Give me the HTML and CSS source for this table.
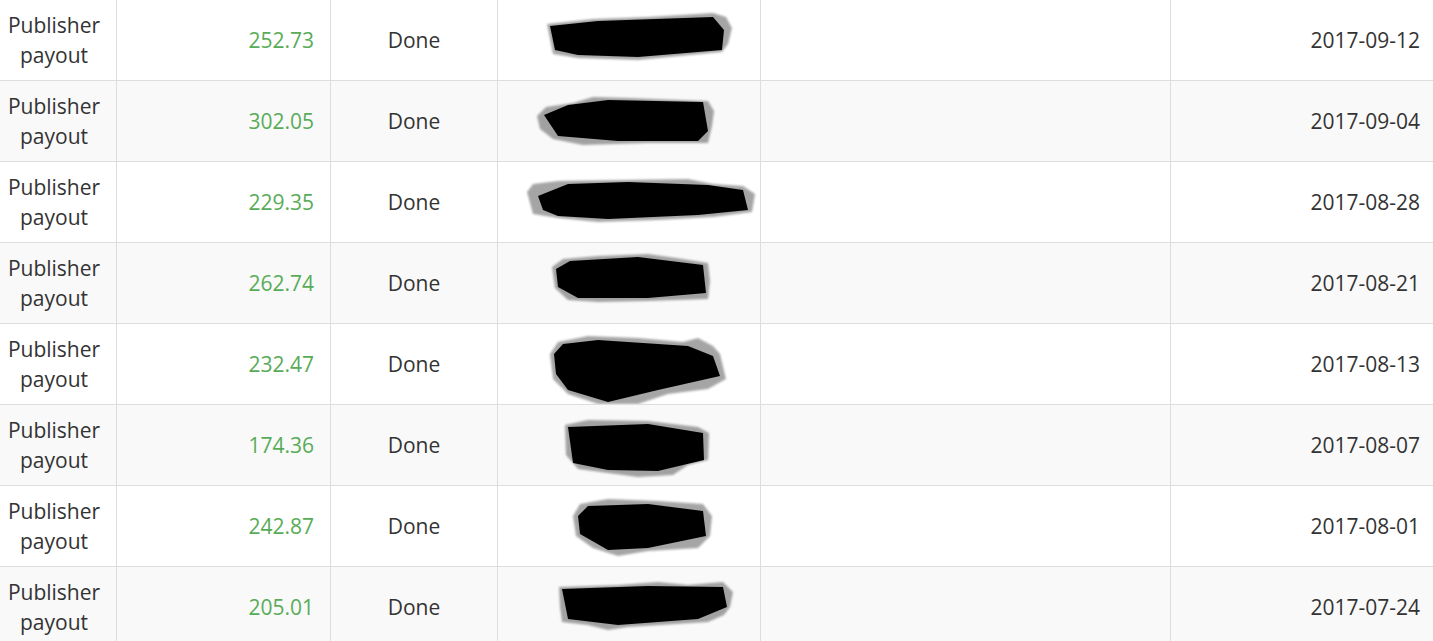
FILE: index.html
```html
<!DOCTYPE html>
<html lang="en">
<head>
    <meta charset="UTF-8">
    <meta name="viewport" content="width=device-width, initial-scale=1.0">
    <title>Payouts</title>
    <link rel="stylesheet" href="styles.css">
</head>
<body>

<svg class="defs" width="0" height="0">
    <filter id="soft"><feGaussianBlur stdDeviation="1.2"/></filter>
</svg>

<div class="payouts">
    <div class="row">
        <div class="cell type">Publisher payout</div>
        <div class="cell amount">252.73</div>
        <div class="cell status">Done</div>
        <div class="cell hidden">
            <svg viewBox="0 0 262 80" width="262" height="80">
                <polygon class="edge" points="49,24 95,19 150,17 215,13 228,17 234,28 230,44 224,52 140,60 80,58 55,54"/>
                <polygon class="ink" points="52,26 100,21 215,17 226,30 224,50 140,57 80,55 57,50"/>
            </svg>
        </div>
        <div class="cell note"></div>
        <div class="cell date">2017-09-12</div>
    </div>
    <div class="row">
        <div class="cell type">Publisher payout</div>
        <div class="cell amount">302.05</div>
        <div class="cell status">Done</div>
        <div class="cell hidden">
            <svg viewBox="0 0 262 80" width="262" height="80">
                <polygon class="edge" points="39,35 48,26 75,22 95,16 130,17 210,20 216,30 214,45 210,62 150,62 85,64 55,58 42,48"/>
                <polygon class="ink" points="46,34 70,24 110,19 205,21 210,50 200,60 120,60 60,55"/>
            </svg>
        </div>
        <div class="cell note"></div>
        <div class="cell date">2017-09-04</div>
    </div>
    <div class="row">
        <div class="cell type">Publisher payout</div>
        <div class="cell amount">229.35</div>
        <div class="cell status">Done</div>
        <div class="cell hidden">
            <svg viewBox="0 0 262 80" width="262" height="80">
                <polygon class="edge" points="29,30 35,22 60,19 120,18 190,17 215,22 245,24 257,32 254,50 215,55 160,58 100,60 60,56 35,52"/>
                <polygon class="ink" points="40,34 70,22 130,20 210,23 245,28 250,48 200,53 110,57 60,54 45,48"/>
            </svg>
        </div>
        <div class="cell note"></div>
        <div class="cell date">2017-08-28</div>
    </div>
    <div class="row">
        <div class="cell type">Publisher payout</div>
        <div class="cell amount">262.74</div>
        <div class="cell status">Done</div>
        <div class="cell hidden">
            <svg viewBox="0 0 262 80" width="262" height="80">
                <polygon class="edge" points="54,24 65,16 100,13 150,11 185,16 210,20 212,38 210,56 150,58 100,59 70,57 57,45"/>
                <polygon class="ink" points="58,26 72,18 140,14 205,22 208,50 150,55 80,55 60,44"/>
            </svg>
        </div>
        <div class="cell note"></div>
        <div class="cell date">2017-08-21</div>
    </div>
    <div class="row">
        <div class="cell type">Publisher payout</div>
        <div class="cell amount">232.47</div>
        <div class="cell status">Done</div>
        <div class="cell hidden">
            <svg viewBox="0 0 262 80" width="262" height="80">
                <polygon class="edge" points="52,30 60,18 90,12 140,14 185,18 200,14 215,22 222,30 228,55 210,65 170,70 140,80 100,80 70,70 55,55"/>
                <polygon class="ink" points="56,30 65,20 100,16 190,22 215,32 222,52 160,66 110,78 70,66 58,50"/>
            </svg>
        </div>
        <div class="cell note"></div>
        <div class="cell date">2017-08-13</div>
    </div>
    <div class="row">
        <div class="cell type">Publisher payout</div>
        <div class="cell amount">174.36</div>
        <div class="cell status">Done</div>
        <div class="cell hidden">
            <svg viewBox="0 0 262 80" width="262" height="80">
                <polygon class="edge" points="67,20 90,15 150,16 200,22 211,28 210,55 190,60 175,70 140,72 110,68 80,64 68,50"/>
                <polygon class="ink" points="70,22 150,19 205,28 206,55 160,66 110,65 75,58"/>
            </svg>
        </div>
        <div class="cell note"></div>
        <div class="cell date">2017-08-07</div>
    </div>
    <div class="row">
        <div class="cell type">Publisher payout</div>
        <div class="cell amount">242.87</div>
        <div class="cell status">Done</div>
        <div class="cell hidden">
            <svg viewBox="0 0 262 80" width="262" height="80">
                <polygon class="edge" points="75,30 82,18 110,13 160,15 205,18 214,30 212,50 200,62 150,65 120,70 95,62 78,50"/>
                <polygon class="ink" points="80,30 90,20 150,18 205,25 208,50 150,62 110,64 82,48"/>
            </svg>
        </div>
        <div class="cell note"></div>
        <div class="cell date">2017-08-01</div>
    </div>
    <div class="row">
        <div class="cell type">Publisher payout</div>
        <div class="cell amount">205.01</div>
        <div class="cell status">Done</div>
        <div class="cell hidden">
            <svg viewBox="0 0 262 80" width="262" height="80">
                <polygon class="edge" points="61,20 120,18 160,15 190,18 225,15 235,25 232,40 226,48 210,55 130,60 110,63 90,58 64,55 62,40"/>
                <polygon class="ink" points="64,22 150,19 225,20 229,40 200,52 120,58 70,52"/>
            </svg>
        </div>
        <div class="cell note"></div>
        <div class="cell date">2017-07-24</div>
    </div>
</div>

</body>
</html>
```

FILE: styles.css
```css
body {
    margin: 0;
    font-family: "Open Sans", sans-serif;
    font-size: 21px;
    line-height: 30px;
    color: #333;
    background-color: white;
    overflow: hidden;
}

.defs {
    display: block;
    width: 0;
    height: 0;
}

.payouts {
    margin-left: -8px;
}

.row {
    display: grid;
    grid-template-columns: 125px 214px 167px 263px 410px 1fr;
}

.row:nth-child(even) {
    background-color: #f9f9f9;
}

.cell {
    box-sizing: border-box;
    height: 81px;
    padding: 10px 8px;
    border-right: 1px solid #ddd;
    border-bottom: 1px solid #ddd;
    display: flex;
    align-items: center;
}

.type {
    justify-content: center;
    text-align: center;
}

.amount {
    justify-content: flex-end;
    padding-right: 16px;
    color: #58ac58;
}

.status {
    justify-content: center;
}

.hidden {
    padding: 0;
    overflow: hidden;
}

.hidden svg {
    display: block;
}

.edge {
    fill: #000;
    opacity: 0.35;
    filter: url(#soft);
}

.ink {
    fill: #000;
}

.date {
    justify-content: flex-end;
    padding-right: 13px;
    border-right: none;
}
```
